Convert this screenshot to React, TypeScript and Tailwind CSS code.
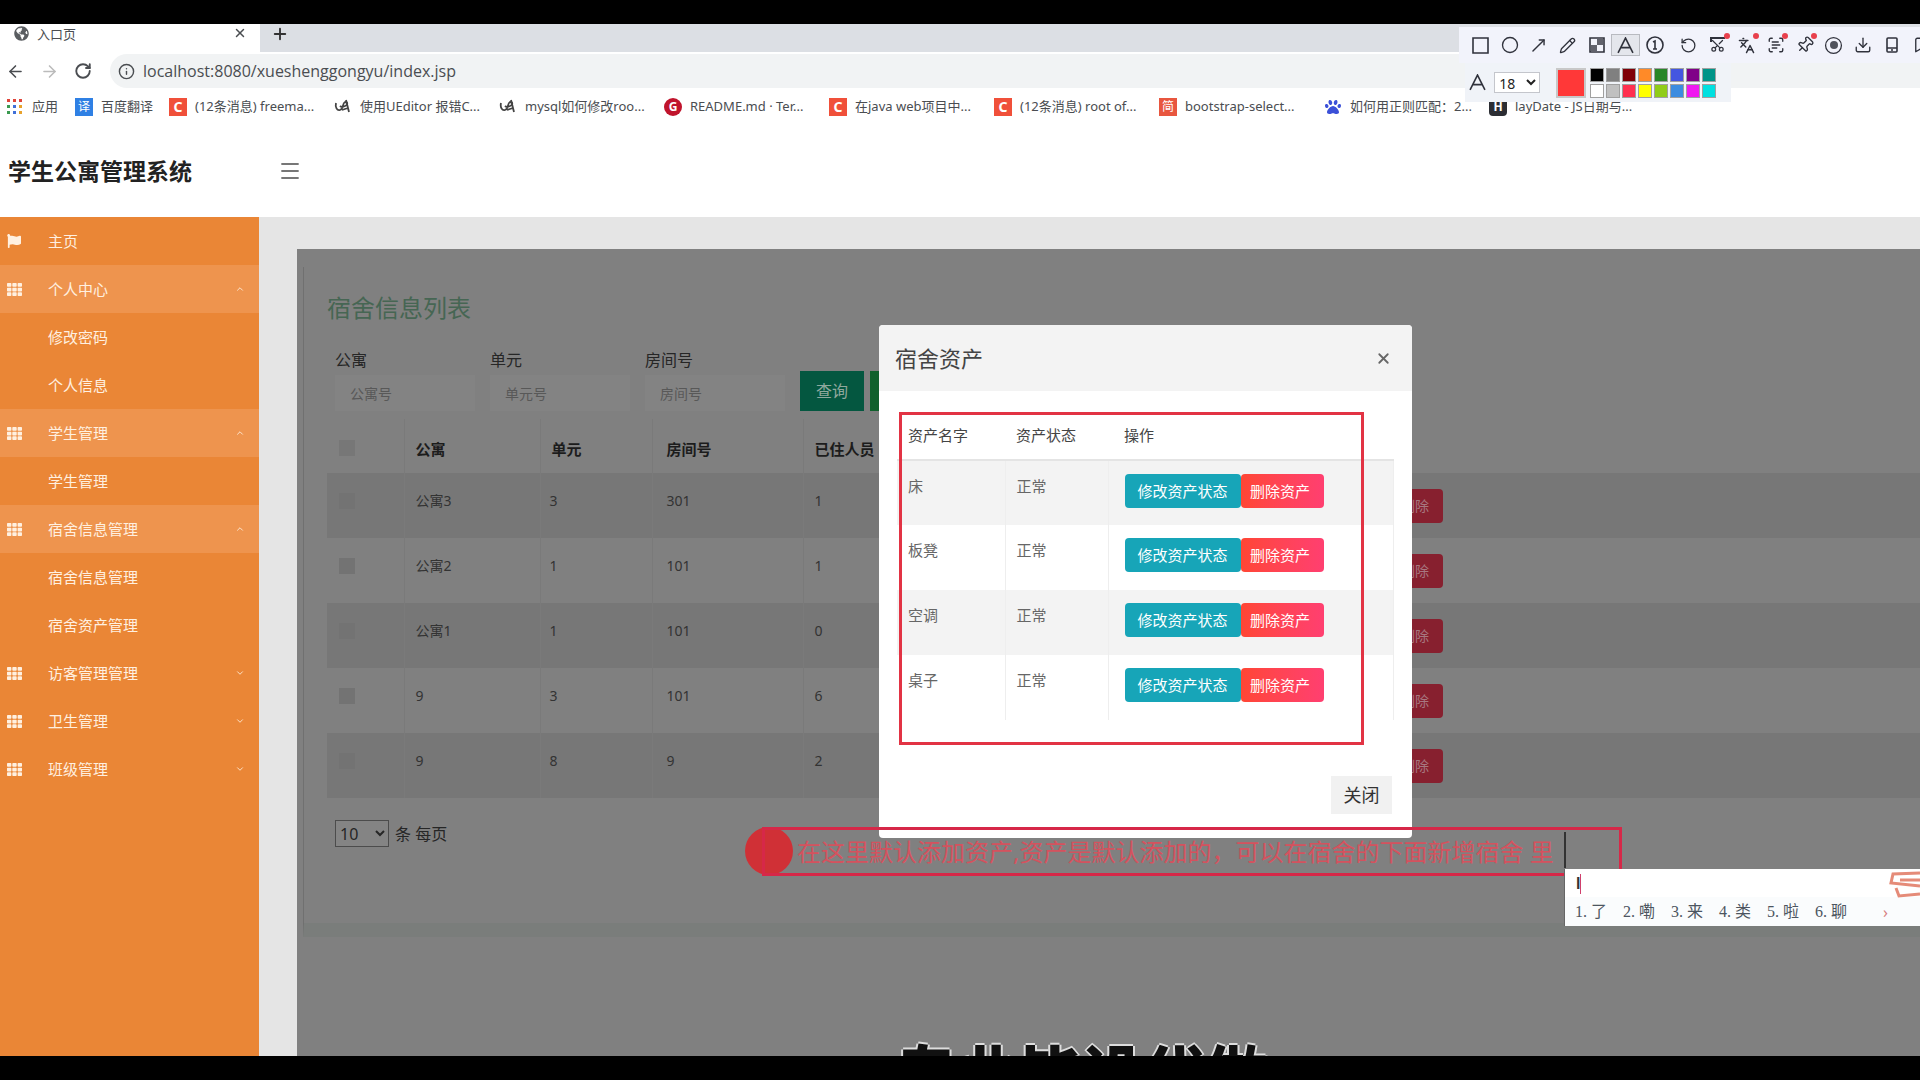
import { useState } from "react";
import type { ReactNode } from "react";
import {
  ArrowLeft,
  ArrowRight,
  Bookmark as BookmarkIcon,
  ChevronDown,
  ChevronUp,
  Circle,
  CircleDot,
  Download,
  Info,
  Languages,
  Menu,
  MoveUpRight,
  Pencil,
  Pin,
  Plus,
  RotateCcw,
  RotateCw,
  ScanText,
  Scissors,
  Square,
  X,
} from "lucide-react";
import { FaFlag, FaGlobeAmericas, FaPaw, FaTh } from "react-icons/fa";

type Bookmark = {
  label: string;
  icon: ReactNode;
};

type MenuItem = {
  label: string;
  kind: "home" | "group" | "child";
  open?: boolean;
};

function CsdnIcon() {
  return (
    <span className="flex h-[18px] w-[18px] shrink-0 items-center justify-center bg-[#f0503a] text-sm font-bold text-white">
      C
    </span>
  );
}

function LoopIcon() {
  return (
    <svg viewBox="0 0 18 18" className="h-[18px] w-[18px] shrink-0" fill="none" stroke="#444" strokeWidth="1.8">
      <path d="M2 5c-1 4 1 8 4 7 4-1 2-7 5-8 3 0 3 3 0 4-2 1-4 1-5 0" />
      <path d="M12 2l3 12M8 12l6-2" />
    </svg>
  );
}

const bookmarks: Bookmark[] = [
  { label: "(12条消息) freema...", icon: <CsdnIcon /> },
  { label: "使用UEditor 报错C...", icon: <LoopIcon /> },
  { label: "mysql如何修改roo...", icon: <LoopIcon /> },
  {
    label: "README.md · Ter...",
    icon: (
      <span className="flex h-[18px] w-[18px] shrink-0 items-center justify-center rounded-full bg-[#c0142c] text-xs font-bold text-white">
        G
      </span>
    ),
  },
  { label: "在java web项目中...", icon: <CsdnIcon /> },
  { label: "(12条消息) root of...", icon: <CsdnIcon /> },
  {
    label: "bootstrap-select...",
    icon: (
      <span className="flex h-[18px] w-[18px] shrink-0 items-center justify-center bg-[#e8563f] text-xs text-white">
        简
      </span>
    ),
  },
  { label: "如何用正则匹配：2...", icon: <FaPaw className="h-4 w-[18px] shrink-0 text-[#3b50d8]" /> },
  {
    label: "layDate - JS日期与...",
    icon: (
      <span className="flex h-[18px] w-[18px] shrink-0 items-center justify-center rounded-sm bg-[#2b2d33] text-xs font-bold text-white">
        H
      </span>
    ),
  },
];

const menu: MenuItem[] = [
  { label: "主页", kind: "home" },
  { label: "个人中心", kind: "group", open: true },
  { label: "修改密码", kind: "child" },
  { label: "个人信息", kind: "child" },
  { label: "学生管理", kind: "group", open: true },
  { label: "学生管理", kind: "child" },
  { label: "宿舍信息管理", kind: "group", open: true },
  { label: "宿舍信息管理", kind: "child" },
  { label: "宿舍资产管理", kind: "child" },
  { label: "访客管理管理", kind: "group" },
  { label: "卫生管理", kind: "group" },
  { label: "班级管理", kind: "group" },
];

const rooms = [
  { building: "公寓3", unit: "3", room: "301", people: "1" },
  { building: "公寓2", unit: "1", room: "101", people: "1" },
  { building: "公寓1", unit: "1", room: "101", people: "0" },
  { building: "9", unit: "3", room: "101", people: "6" },
  { building: "9", unit: "8", room: "9", people: "2" },
];

const filters = [
  { id: "building", label: "公寓", placeholder: "公寓号" },
  { id: "unit", label: "单元", placeholder: "单元号" },
  { id: "room", label: "房间号", placeholder: "房间号" },
];

const assets = ["床", "板凳", "空调", "桌子"];

const candidates = ["了", "嘞", "来", "类", "啦", "聊"];

const swatches = [
  "bg-black", "bg-[#808080]", "bg-[#800008]", "bg-[#ff8a28]", "bg-[#288628]", "bg-[#4456e0]", "bg-[#800088]", "bg-[#009488]",
  "bg-white", "bg-[#c0c0c0]", "bg-[#ff3050]", "bg-[#ffff00]", "bg-[#90cc18]", "bg-[#3c8ce0]", "bg-[#f018f0]", "bg-[#00e0e0]",
];

function BrowserBar() {
  return (
    <div className="shrink-0 bg-white text-[#4a4d51]">
      <div className="flex h-7 bg-[#dcdfe4]">
        <div className="flex w-[260px] items-start gap-2 bg-white pt-[2px] pl-[14px] text-[13px] leading-4">
          <FaGlobeAmericas className="h-[15px] w-[15px] text-[#5a5d61]" />
          <span className="flex-1">入口页</span>
          <button type="button" aria-label="关闭标签页" className="mr-[13px]">
            <X size={14} strokeWidth={2.5} />
          </button>
        </div>
        <button type="button" aria-label="新标签页" className="ml-[11px] h-5 text-[#333]">
          <Plus size={18} strokeWidth={2.5} />
        </button>
      </div>
      <div className="flex h-[38px] items-center pl-[6px]">
        <button type="button" aria-label="后退" className="w-[34px]">
          <ArrowLeft size={19} />
        </button>
        <button type="button" aria-label="前进" className="w-[34px] text-[#bbb]">
          <ArrowRight size={19} />
        </button>
        <button type="button" aria-label="刷新" className="w-9">
          <RotateCw size={18} strokeWidth={2.5} />
        </button>
        <div className="flex h-[34px] flex-1 items-center gap-2 rounded-l-full bg-[#f1f3f4] pl-2">
          <Info size={17} />
          <input
            aria-label="地址"
            defaultValue="localhost:8080/xueshenggongyu/index.jsp"
            className="flex-1 bg-transparent font-['Open_Sans','Noto_Sans',sans-serif] text-base outline-none"
          />
        </div>
      </div>
      <div className="flex h-[33px] items-center overflow-hidden pl-[7px] text-[13px] whitespace-nowrap">
        <a href="#apps" className="flex w-[68px] items-center gap-[10px]">
          <svg viewBox="0 0 15 15" className="h-[15px] w-[15px]">
            <path fill="#e0453a" d="M0 0h3v3H0zM6 0h3v3H6zM12 0h3v3h-3z" />
            <path fill="#3a9a50" d="M0 6h3v3H0zM0 12h3v3H0z" />
            <path fill="#4070d8" d="M6 6h3v3H6zM6 12h3v3H6z" />
            <path fill="#e8a22c" d="M12 6h3v3h-3zM12 12h3v3h-3z" />
          </svg>
          应用
        </a>
        <a href="#fanyi" className="flex w-[94px] items-center gap-2">
          <span className="flex h-[18px] w-[18px] items-center justify-center bg-[#2f80e4] text-xs text-white">译</span>
          百度翻译
        </a>
        {bookmarks.map((b, i) => (
          <a key={i} href="#bookmark" className="flex w-[165px] shrink-0 items-center gap-2">
            {b.icon}
            {b.label}
          </a>
        ))}
      </div>
    </div>
  );
}

function ToolButton({ label, dot, active, children }: { label: string; dot?: boolean; active?: boolean; children: ReactNode }) {
  return (
    <button
      type="button"
      aria-label={label}
      className={
        active
          ? "relative flex h-[22px] w-[29px] shrink-0 items-center justify-center border border-[#b8bac0] bg-[#e4e6ec]"
          : "relative flex h-[22px] w-[29px] shrink-0 items-center justify-center"
      }
    >
      {children}
      {dot && <span className="absolute -top-px right-[2px] h-[6px] w-[6px] rounded-full bg-[#e8404c]" />}
    </button>
  );
}

function LetterA({ size }: { size: number }) {
  return (
    <svg width={size} height={size} viewBox="0 0 16 16" fill="none" stroke="currentColor" strokeWidth="1.5">
      <path d="M1 15L8 1l7 14M4 10h8" />
    </svg>
  );
}

function CaptureToolbar() {
  return (
    <div className="absolute top-[3px] left-[76%] w-[24%] text-[#30323c]">
      <div className="flex h-9 items-center overflow-hidden bg-[#f2f3fb] pl-[7px]">
        <ToolButton label="矩形">
          <svg width="17" height="17" viewBox="0 0 17 17" fill="none" stroke="currentColor" strokeWidth="1.6">
            <path d="M1 1h15v15H1z" />
          </svg>
        </ToolButton>
        <ToolButton label="椭圆"><Circle size={18} strokeWidth={1.8} /></ToolButton>
        <ToolButton label="箭头"><MoveUpRight size={19} strokeWidth={1.8} /></ToolButton>
        <ToolButton label="画笔"><Pencil size={17} strokeWidth={1.8} /></ToolButton>
        <ToolButton label="马赛克">
          <svg width="16" height="16" viewBox="0 0 16 16" fill="none" stroke="currentColor" strokeWidth="1.6">
            <path d="M1 1h14v14H1z" />
            <path fill="currentColor" stroke="none" d="M8 2h6v6H8zM2 8h6v6H2z" opacity="0.75" />
          </svg>
        </ToolButton>
        <ToolButton label="文字" active><LetterA size={17} /></ToolButton>
        <ToolButton label="序号">
          <svg width="18" height="18" viewBox="0 0 18 18" fill="none" stroke="currentColor" strokeWidth="1.6">
            <circle cx="9" cy="9" r="8" />
            <path d="M7 6l2-1v8M7 13h4" />
          </svg>
        </ToolButton>
        <span className="w-[5px] shrink-0" />
        <ToolButton label="撤销"><RotateCcw size={17} strokeWidth={1.8} /></ToolButton>
        <ToolButton label="裁剪" dot>
          <Scissors size={15} strokeWidth={2} className="-rotate-90" />
          <span className="absolute top-[3px] left-[7px] h-[5px] w-[15px] border-t-2 border-l-2 border-current" />
        </ToolButton>
        <ToolButton label="翻译" dot>
          <Languages size={17} strokeWidth={2} />
        </ToolButton>
        <ToolButton label="识别文字" dot><ScanText size={18} strokeWidth={1.8} /></ToolButton>
        <ToolButton label="钉住" dot><Pin size={18} strokeWidth={1.8} className="rotate-45" /></ToolButton>
        <ToolButton label="录制">
          <CircleDot size={19} strokeWidth={1.6} />
          <span className="absolute h-2 w-2 rounded-full bg-[#50525c]" />
        </ToolButton>
        <ToolButton label="保存"><Download size={18} strokeWidth={1.8} /></ToolButton>
        <ToolButton label="发送到手机">
          <svg width="14" height="18" viewBox="0 0 14 18" fill="none" stroke="currentColor" strokeWidth="1.6">
            <rect x="2" y="2" width="10" height="14" rx="1" />
            <path d="M2 12h10M6 14h2" />
          </svg>
        </ToolButton>
        <ToolButton label="收藏"><BookmarkIcon size={18} strokeWidth={1.8} /></ToolButton>
      </div>
      <div className="ml-[6px] flex h-[39px] w-[266px] items-center bg-[#f0f3f8] pl-1">
        <LetterA size={17} />
        <select aria-label="字号" className="ml-2 h-[21px] w-[46px] border border-[#c4c6cc] bg-white text-sm text-[#222]">
          <option>18</option>
        </select>
        <button type="button" aria-label="当前颜色" className="ml-4 h-[30px] w-[30px] border-2 border-[#c8c8c8] bg-[#ff3838]" />
        <div className="ml-[4px] grid grid-cols-8 gap-[2px]">
          {swatches.map((s) => (
            <button key={s} type="button" aria-label="颜色" className={`h-[14px] w-[14px] border border-[#a0a0a0] ${s}`} />
          ))}
        </div>
      </div>
    </div>
  );
}

function Sidebar() {
  return (
    <nav className="w-[259px] shrink-0 bg-[#ea8636] text-[15px] text-[#fff0e0]">
      {menu.map((item, i) => (
        <a
          key={i}
          href="#menu"
          className={item.open ? "flex h-12 items-center bg-[#ee944e] pr-[14px] pl-[7px]" : "flex h-12 items-center pr-[14px] pl-[7px]"}
        >
          <span className="w-[41px]">
            {item.kind === "home" && <FaFlag className="h-[14px] w-[14px]" />}
            {item.kind === "group" && <FaTh className="h-[15px] w-[15px]" />}
          </span>
          <span className="flex-1">{item.label}</span>
          {item.kind === "group" && (item.open ? <ChevronUp size={10} /> : <ChevronDown size={10} />)}
        </a>
      ))}
    </nav>
  );
}

function RoomList() {
  return (
    <section className="flex-1 bg-[#808080] pt-[18px] pl-[6px] text-[#333]">
      <div className="h-[670px] border-b-[14px] border-l border-[#7a7d7b] border-l-[#707070] pt-[23px] pl-[23px]">
        <h1 className="text-2xl leading-9 text-[#466653]">宿舍信息列表</h1>
        <form className="mt-[22px] flex items-end">
          {filters.map((f) => (
            <div key={f.id} className="w-[155px] pl-2">
              <label htmlFor={f.id} className="block leading-6 text-[#262626]">
                {f.label}
              </label>
              <input
                id={f.id}
                placeholder={f.placeholder}
                className="mt-[3px] h-9 w-[140px] bg-[#838383] px-[15px] text-sm placeholder:text-[#585858]"
              />
            </div>
          ))}
          <button type="button" className="ml-2 h-10 w-16 bg-[#045740] text-base text-[#8fa89d]">
            查询
          </button>
          <button type="button" className="ml-[6px] h-10 w-16 bg-[#10602c] text-base text-[#8fa89d]">
            添加
          </button>
        </form>
        <table className="mt-2 w-full table-fixed text-left text-sm">
          <colgroup>
            <col className="w-[77px]" />
            <col className="w-[136px]" />
            <col className="w-[112px]" />
            <col className="w-[151px]" />
            <col className="w-[573px]" />
            <col />
          </colgroup>
          <thead>
            <tr className="h-[54px] text-[15px] text-[#1c1c1c]">
              <th className="border-r border-[#7a7a7a] pt-1 pl-3">
                <input type="checkbox" aria-label="全选" className="block h-4 w-4 appearance-none bg-[#777777]" />
              </th>
              <th className="border-r border-[#7a7a7a] pt-2 pl-[11px]">公寓</th>
              <th className="border-r border-[#7a7a7a] pt-2 pl-[11px]">单元</th>
              <th className="border-r border-[#7a7a7a] pt-2 pl-[14px]">房间号</th>
              <th className="pt-2 pl-[11px]">已住人员</th>
              <th />
            </tr>
          </thead>
          <tbody>
            {rooms.map((r, i) => (
              <tr key={i} className="h-[65px] align-top odd:bg-[#777777]">
                <td className="border-r border-[#7a7a7a] pt-5 pl-3">
                  <input type="checkbox" aria-label={r.building} className="block h-4 w-4 appearance-none bg-[#737373]" />
                </td>
                <td className="border-r border-[#7a7a7a] pt-[18px] pl-[11px]">{r.building}</td>
                <td className="border-r border-[#7a7a7a] pt-[18px] pl-[9px]">{r.unit}</td>
                <td className="border-r border-[#7a7a7a] pt-[18px] pl-[14px]">{r.room}</td>
                <td className="pt-[18px] pl-[11px]">{r.people}</td>
                <td className="pt-4 pl-[11px]">
                  <button type="button" className="h-[34px] w-14 rounded-sm bg-[#87202f] text-sm text-[#a77880]">
                    删除
                  </button>
                </td>
              </tr>
            ))}
          </tbody>
        </table>
        <label className="mt-[22px] flex items-center gap-[6px] pl-2 text-[#262626]">
          <select className="h-[27px] w-[54px] border border-[#4c4c4c] bg-[#848484] text-base">
            <option>10</option>
          </select>
          条 每页
        </label>
      </div>
    </section>
  );
}

function AssetDialog({ onClose }: { onClose: () => void }) {
  return (
    <div
      role="dialog"
      aria-label="宿舍资产"
      className="absolute top-[301px] left-[879px] w-[533px] overflow-hidden rounded-sm bg-white text-[#444]"
    >
      <div className="flex h-[66px] items-center justify-between bg-[#f3f3f3] pr-5 pl-4">
        <h2 className="text-[22px]">宿舍资产</h2>
        <button type="button" aria-label="关闭" onClick={onClose} className="text-[#666]">
          <X size={17} strokeWidth={2.5} />
        </button>
      </div>
      <div className="px-[18px] pt-5">
        <table className="w-full table-fixed text-left text-[15px]">
          <colgroup>
            <col className="w-[108px]" />
            <col className="w-[103px]" />
            <col />
          </colgroup>
          <thead>
            <tr className="h-[49px] border-b-2 border-[#e4e4e4]">
              <th className="pl-[11px] font-normal">资产名字</th>
              <th className="pl-[11px] font-normal">资产状态</th>
              <th className="pl-4 font-normal">操作</th>
            </tr>
          </thead>
          <tbody>
            {assets.map((name) => (
              <tr key={name} className="h-[65px] align-top odd:bg-[#f3f3f3]">
                <td className="border-r border-[#eee] pt-[14px] pl-[11px] text-[#666]">{name}</td>
                <td className="border-r border-[#eee] pt-[14px] pl-[11px] text-[#666]">正常</td>
                <td className="border-r border-[#eee] pt-[13px] pl-4">
                  <div className="flex text-white">
                    <button type="button" className="h-[34px] w-[116px] rounded-sm bg-[#17a5b8]">
                      修改资产状态
                    </button>
                    <button
                      type="button"
                      className="h-[34px] w-[83px] rounded-sm bg-linear-to-r from-[#ff4633] to-[#ff3f70] pr-1"
                    >
                      删除资产
                    </button>
                  </div>
                </td>
              </tr>
            ))}
          </tbody>
        </table>
      </div>
      <div className="flex justify-end px-5 pt-14 pb-6">
        <button type="button" onClick={onClose} className="h-[38px] w-[61px] bg-[#f1f1f1] text-lg text-[#333]">
          关闭
        </button>
      </div>
    </div>
  );
}

function Annotations() {
  return (
    <>
      <div className="absolute top-[388px] left-[899px] h-[333px] w-[465px] border-[3px] border-[#e23344]" />
      <div className="absolute top-[803px] left-[745px] h-12 w-12 rounded-full bg-[#d03036]" />
      <div className="absolute top-[803px] left-[762px] flex h-[49px] w-[860px] items-center border-[3px] border-[#d62848] pl-8 text-2xl whitespace-nowrap text-[#d4525e]">
        在这里默认添加资产,资产是默认添加的，可以在宿舍的下面新增宿舍 里
      </div>
      <div className="absolute top-[808px] left-[1564px] h-9 w-[2px] bg-[#333]" />
    </>
  );
}

function ImePanel() {
  return (
    <div className="absolute top-[845px] right-0 left-[1564px] overflow-hidden border-l border-[#666] bg-white pt-[2px] text-[#4c5560]">
      <div className="flex h-[26px] items-center justify-between pl-[11px]">
        <span className="border-r border-[#d0406c] font-['Liberation_Sans',sans-serif] leading-5 font-bold text-[#333]">l</span>
        <svg viewBox="0 0 32 28" className="h-7 w-8" fill="none" stroke="#e58b78" strokeWidth="3">
          <path d="M32 3L5 4l-2 9 29 3M8 18l3 8 21-2M12 10h20" />
        </svg>
      </div>
      <div className="flex h-[29px] items-center bg-[#fafcfd] pl-[10px] text-base">
        {candidates.map((c, i) => (
          <span key={c} className="w-12 font-['Liberation_Serif','Noto_Sans_CJK_SC',serif]">
            {i + 1}. {c}
          </span>
        ))}
        <span className="pl-5 text-[#d88080]">›</span>
      </div>
    </div>
  );
}

function App() {
  const [dialogOpen, setDialogOpen] = useState(true);

  return (
    <div className="flex h-screen flex-col overflow-hidden bg-black py-6 font-['Noto_Sans','Noto_Sans_CJK_SC',sans-serif]">
      <div className="relative flex min-h-0 flex-1 flex-col overflow-hidden bg-white">
        <BrowserBar />
        <header className="flex h-[94px] shrink-0 items-center pt-[2px] pl-2">
          <div className="w-[270px] text-[23px] font-bold text-[#222]">学生公寓管理系统</div>
          <button type="button" aria-label="菜单" className="text-[#777]">
            <Menu size={24} strokeWidth={1.8} />
          </button>
        </header>
        <div className="flex min-h-0 flex-1">
          <Sidebar />
          <main className="flex min-w-0 flex-1 bg-[#e5e5e5] pt-8 pl-[38px]">
            <RoomList />
          </main>
        </div>

        <CaptureToolbar />
        {dialogOpen && <AssetDialog onClose={() => setDialogOpen(false)} />}
        <Annotations />
        <ImePanel />
        <p className="absolute top-[1013px] left-[895px] text-[62px] leading-[74px] font-black whitespace-nowrap text-[#111] [text-shadow:2px_0_#ddd,-2px_0_#ddd,0_-2px_#ddd,0_2px_#ddd]">
          专业毕设代做
        </p>
      </div>
    </div>
  );
}

export default App;
